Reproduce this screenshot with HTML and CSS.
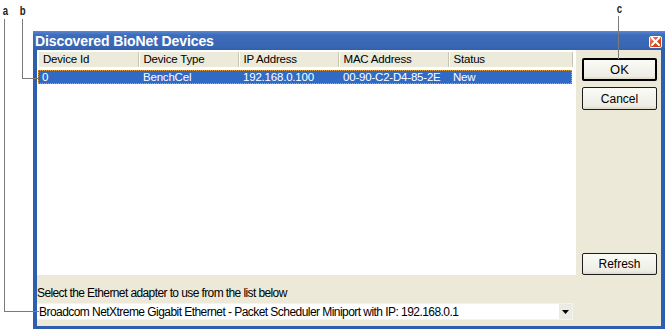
FILE: index.html
```html
<!DOCTYPE html>
<html lang="en">
<head>
  <meta charset="UTF-8" />
  <title>Discovered BioNet Devices</title>
  <link rel="stylesheet" href="styles.css">
</head>
<body>
  <div class="page">
    <!-- callout labels -->
    <span class="callout callout-a">a</span>
    <span class="callout callout-b">b</span>
    <span class="callout callout-c">c</span>
    <div class="lead lead-a-v"></div>
    <div class="lead lead-a-h"></div>
    <div class="lead lead-b-v"></div>
    <div class="lead lead-b-h"></div>
    <div class="lead lead-c-v"></div>

    <div class="window">
      <div class="titlebar">
        <span class="title">Discovered BioNet Devices</span>
        <span class="close-btn">
          <svg width="9" height="9" viewBox="0 0 9 9"><path d="M1 1 L8 8 M8 1 L1 8" stroke="#fff" stroke-width="2" stroke-linecap="square"/></svg>
        </span>
      </div>
      <div class="client">
        <div class="main">
          <div class="listview">
            <table>
              <thead>
                <tr>
                  <th>Device Id</th><th>Device Type</th><th>IP Address</th><th>MAC Address</th><th>Status</th>
                </tr>
              </thead>
              <tbody>
                <tr class="selected">
                  <td>0</td><td>BenchCel</td><td>192.168.0.100</td><td>00-90-C2-D4-85-2E</td><td>New</td>
                </tr>
              </tbody>
            </table>
          </div>
          <div class="side">
            <button class="btn btn-default">OK</button>
            <button class="btn">Cancel</button>
            <button class="btn btn-bottom">Refresh</button>
          </div>
        </div>
        <div class="prompt">Select the Ethernet adapter to use from the list below</div>
        <div class="combo">
          <span class="combo-text">Broadcom NetXtreme Gigabit Ethernet - Packet Scheduler Miniport with IP: 192.168.0.1</span>
          <span class="combo-arrow">
            <svg width="7" height="4" viewBox="0 0 7 4"><path d="M0 0 H7 L3.5 4 Z" fill="#000"/></svg>
          </span>
        </div>
      </div>
    </div>
  </div>
</body>
</html>
```

FILE: styles.css
```css
:root {
  --face: #ece9d8;
  --title-blue: #3b68b5;
  --frame-blue: #2e5eae;
  --select-blue: #316ac5;
  --lead: #7a7a7a;
}
* { box-sizing: border-box; margin: 0; padding: 0; }
body {
  background: #fff;
  font-family: "Liberation Sans", Arial, sans-serif;
  font-size: 11px;
  color: #000;
  width: 666px;
  height: 329px;
  overflow: hidden;
}
.page {
  position: relative;
  width: 666px;
  height: 329px;
  padding: 31px 1px 0 33px;
}

/* callouts */
.callout {
  position: absolute;
  top: 5px;
  font-size: 12px;
  font-weight: bold;
  line-height: 13px;
  color: #222;
  transform: scaleX(0.8);
}
.callout-a { left: 2px; }
.callout-b { left: 19px; }
.callout-c { left: 616px; top: 3px; }
.lead { position: absolute; background: var(--lead); }
.lead-a-v { left: 4px; top: 19px; width: 1px; height: 293px; }
.lead-a-h { left: 4px; top: 311px; width: 35px; height: 1px; }
.lead-b-v { left: 22px; top: 19px; width: 1px; height: 60px; }
.lead-b-h { left: 22px; top: 78px; width: 17px; height: 1px; }
.lead-c-v { left: 618px; top: 16px; width: 1px; height: 43px; z-index: 2; }

/* window */
.window {
  width: 632px;
  height: 300px;
  background: var(--frame-blue);
  border-top: 1px solid #5b86cf;
  padding: 0 4px 5px 4px;
  display: flex;
  flex-direction: column;
}
.titlebar {
  height: 18px;
  display: flex;
  align-items: center;
  justify-content: space-between;
  background: linear-gradient(#5481cc 0, #3d6cba 3px, #3a67b4 14px, #335fac 18px);
  margin: 0 -4px;
  padding: 0 3px 0 2px;
}
.title {
  color: #fff;
  font-weight: bold;
  font-size: 14px;
  letter-spacing: -0.1px;
  line-height: 18px;
}
.close-btn {
  width: 13px;
  height: 12px;
  border: 1px solid #fff;
  border-radius: 2px;
  background: linear-gradient(135deg, #f08a62, #d9461c 60%, #c13a14);
  display: flex;
  align-items: center;
  justify-content: center;
  margin-top: 1px;
}
.client {
  flex: 1;
  background: var(--face);
  display: flex;
  flex-direction: column;
  padding-bottom: 4px;
}
.main {
  display: flex;
  height: 225px;
}
.listview {
  width: 539px;
  background: #fff;
  padding: 2px 0 0 1px;
}
table {
  border-collapse: collapse;
  table-layout: fixed;
  width: 534px;
}
th {
  font-weight: normal;
  text-align: left;
  height: 16px;
  padding: 0 5px;
  background: #ebeadb;
  border-right: 1px solid #c7c5b2;
  border-bottom: 2px solid #d6d2c2;
  box-shadow: inset 1px 0 #fff;
  white-space: nowrap;
  font-size: 11.5px;
  letter-spacing: -0.2px;
}
th:nth-child(1), td:nth-child(1) { width: 100px; }
th:nth-child(2), td:nth-child(2) { width: 100px; }
th:nth-child(3), td:nth-child(3) { width: 100px; }
th:nth-child(4), td:nth-child(4) { width: 110px; }
th:nth-child(5), td:nth-child(5) { width: 124px; }
td {
  height: 16px;
  padding: 0 5px;
  white-space: nowrap;
  font-size: 11.5px;
  letter-spacing: -0.2px;
}
tbody tr:first-child td { border-top: 3px solid #fff; }
.selected td {
  color: #fff;
  background-image:
    repeating-linear-gradient(90deg, #e0a040 0 1px, transparent 1px 2px),
    repeating-linear-gradient(90deg, #e0a040 0 1px, transparent 1px 2px);
  background-size: 100% 1px, 100% 1px;
  background-position: top, bottom;
  background-repeat: no-repeat;
  background-color: var(--select-blue);
}
.selected td:first-child {
  background-image:
    repeating-linear-gradient(90deg, #e0a040 0 1px, transparent 1px 2px),
    repeating-linear-gradient(90deg, #e0a040 0 1px, transparent 1px 2px),
    repeating-linear-gradient(#e0a040 0 1px, transparent 1px 2px);
  background-size: 100% 1px, 100% 1px, 1px 100%;
  background-position: top, bottom, left;
  padding-left: 4px;
}
.selected td:last-child {
  background-image:
    repeating-linear-gradient(90deg, #e0a040 0 1px, transparent 1px 2px),
    repeating-linear-gradient(90deg, #e0a040 0 1px, transparent 1px 2px),
    repeating-linear-gradient(#e0a040 0 1px, transparent 1px 2px);
  background-size: 100% 1px, 100% 1px, 1px 100%;
  background-position: top, bottom, right;
}

/* buttons */
.side {
  flex: 1;
  display: flex;
  flex-direction: column;
  gap: 6px;
  padding: 8px 4px 0 6px;
}
.btn {
  height: 23px;
  width: 75px;
  font-family: inherit;
  font-size: 12px;
  background: linear-gradient(#fbfbf8, #eeede4 85%, #dcd8c8);
  border: 1px solid #1c1c1c;
  border-radius: 2px;
  color: #000;
}
.btn-default {
  border: 2px solid #000;
  font-size: 13px;
}
.btn-bottom { margin-top: auto; height: 22px; }

/* adapter selection */
.prompt {
  padding: 11px 0 0 0;
  height: 28px;
  line-height: 15px;
  font-size: 12px;
  letter-spacing: -0.6px;
}
.combo {
  width: 536px;
  height: 17px;
  background: #fff;
  border: 1px solid #f4f4ee;
  border-left: none;
  display: flex;
  align-items: center;
  justify-content: space-between;
}
.combo-text {
  padding-left: 2px;
  font-size: 12px;
  letter-spacing: -0.55px;
  white-space: nowrap;
}
.combo-arrow {
  width: 13px;
  height: 15px;
  background: #ecebe3;
  display: flex;
  align-items: center;
  justify-content: center;
}
```
